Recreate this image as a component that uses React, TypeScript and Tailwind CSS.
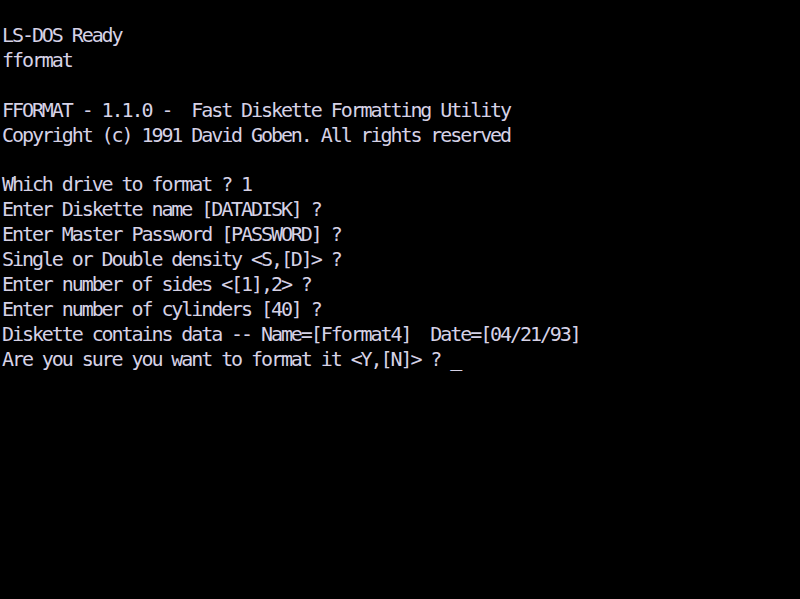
import React from "react";

const lines = [
  "LS-DOS Ready",
  "fformat",
  "",
  "FFORMAT - 1.1.0 -  Fast Diskette Formatting Utility",
  "Copyright (c) 1991 David Goben. All rights reserved",
  "",
  "Which drive to format ? 1",
  "Enter Diskette name [DATADISK] ?",
  "Enter Master Password [PASSWORD] ?",
  "Single or Double density <S,[D]> ?",
  "Enter number of sides <[1],2> ?",
  "Enter number of cylinders [40] ?",
  "Diskette contains data -- Name=[Fformat4]  Date=[04/21/93]",
  "Are you sure you want to format it <Y,[N]> ? _",
];

const App = () => {
  return (
    <div className="w-[800px] h-[599px] bg-black overflow-hidden pt-[23px] pl-[2px]">
      <div className="font-['DejaVu_Sans_Mono',monospace] text-[20px] tracking-[-2.08px] leading-[24.9px] text-[#d6d2e6] whitespace-pre">
        {lines.map((line, i) => (
          <div key={i} className="h-[24.9px]">
            {line}
          </div>
        ))}
      </div>
    </div>
  );
};

export default App;
